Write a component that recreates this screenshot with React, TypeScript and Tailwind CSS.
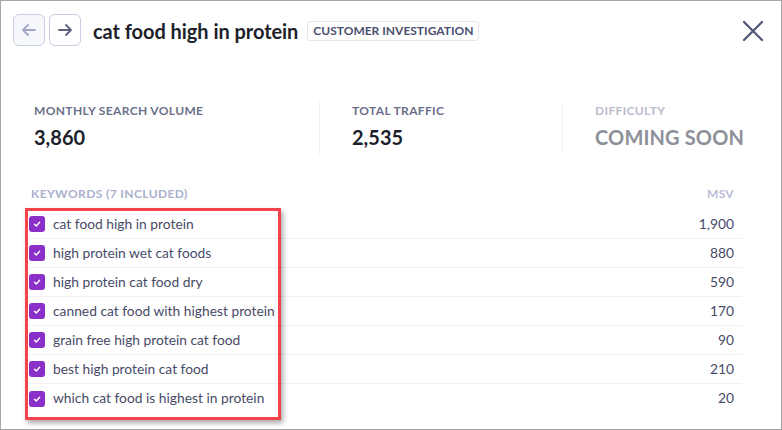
import React from "react";

const rows: [string, string][] = [
  ["cat food high in protein", "1,900"],
  ["high protein wet cat foods", "880"],
  ["high protein cat food dry", "590"],
  ["canned cat food with highest protein", "170"],
  ["grain free high protein cat food", "90"],
  ["best high protein cat food", "210"],
  ["which cat food is highest in protein", "20"],
];

function Check() {
  return (
    <div className="w-[16px] h-[16px] rounded-[3px] bg-[#8b2fc9] flex items-center justify-center shrink-0">
      <svg width="10" height="10" viewBox="0 0 10 10">
        <path d="M2.5 5.2 L4.3 7 L7.6 3.2" fill="none" stroke="white" strokeWidth="1.4" strokeLinecap="round" strokeLinejoin="round" />
      </svg>
    </div>
  );
}

export default function App() {
  return (
    <div
      className="w-[782px] h-[430px] border border-[#a6a6a6] bg-white relative overflow-hidden"
      style={{ fontFamily: "Lato, 'Noto Sans', sans-serif" }}
    >
      {/* header */}
      <div className="flex items-center pl-[12px] pt-[13px] pr-[17px]">
        <button className="w-[32px] h-[32px] rounded-[6px] border border-[#c9cee2] bg-[#f5f7fc] flex items-center justify-center">
          <svg width="18" height="18" viewBox="0 0 18 18">
            <path d="M15 9 H3 M8 4 L3 9 L8 14" fill="none" stroke="#a3a9c4" strokeWidth="1.8" strokeLinecap="round" strokeLinejoin="round" />
          </svg>
        </button>
        <button className="ml-[4px] w-[32px] h-[32px] rounded-[6px] border border-[#c9cee2] bg-white flex items-center justify-center">
          <svg width="18" height="18" viewBox="0 0 18 18">
            <path d="M3 9 H15 M10 4 L15 9 L10 14" fill="none" stroke="#5d6280" strokeWidth="1.8" strokeLinecap="round" strokeLinejoin="round" />
          </svg>
        </button>
        <div className="ml-[12px] text-[20px] font-bold text-[#1d1f2b] leading-none tracking-[-0.05px] mt-[2px]">cat food high in protein</div>
        <div className="ml-[9px] h-[20px] px-[5px] rounded-[3px] border border-[#e3e6ef] flex items-center text-[12px] font-bold text-[#4b5070] tracking-[0px] mt-[2px]">
          CUSTOMER INVESTIGATION
        </div>
        <div className="flex-1" />
        <svg width="22" height="22" viewBox="0 0 22 22" className="mt-[2px]">
          <path d="M2 2 L20 20 M20 2 L2 20" stroke="#4f5573" strokeWidth="2.2" strokeLinecap="round" />
        </svg>
      </div>

      {/* stats */}
      <div className="flex mt-[56px] h-[52px]">
        <div className="w-[319px] pl-[33px] border-r border-[#eceef4] pt-[2px]">
          <div className="text-[12px] font-bold text-[#6b6f89] leading-[14px] tracking-[0.35px]">MONTHLY SEARCH VOLUME</div>
          <div className="mt-[7px] text-[20px] font-bold text-[#1d1f2b] leading-[24px]">3,860</div>
        </div>
        <div className="w-[243px] pl-[32px] border-r border-[#eceef4] pt-[2px]">
          <div className="text-[12px] font-bold text-[#6b6f89] leading-[14px] tracking-[0.35px]">TOTAL TRAFFIC</div>
          <div className="mt-[7px] text-[20px] font-bold text-[#1d1f2b] leading-[24px]">2,535</div>
        </div>
        <div className="pl-[32px] pt-[2px]">
          <div className="text-[12px] font-bold text-[#b9bccb] leading-[14px] tracking-[0.35px]">DIFFICULTY</div>
          <div className="mt-[7px] text-[20px] font-bold text-[#8e9099] leading-[24px] tracking-[0.15px]">COMING SOON</div>
        </div>
      </div>

      {/* keywords */}
      <div className="mt-[33px] pl-[25px] w-[741px]">
        <div className="flex justify-between pl-[5px] pr-[8px] text-[12px] font-bold leading-[14px]">
          <span className="text-[#a9b1cc] tracking-[0.4px]">KEYWORDS (7 INCLUDED)</span>
          <span className="text-[#b8bcd4] tracking-[0.3px]">MSV</span>
        </div>
        <div className="mt-[9px]">
          {rows.map(([k, v], i) => (
            <div
              key={i}
              className={`flex items-center h-[29px] pl-[3px] pr-[8px] ${i < rows.length - 1 ? "border-b border-[#f0f1f5]" : ""}`}
            >
              <Check />
              <span className="ml-[8px] text-[13.8px] text-[#474b67]">{k}</span>
              <span className="ml-auto text-[13.8px] text-[#474b67]">{v}</span>
            </div>
          ))}
        </div>
      </div>

      {/* highlight box */}
      <div className="absolute left-[24px] top-[207px] w-[256px] h-[212px] border-[3px] border-[#f2444a] shadow-[2px_3px_5px_rgba(0,0,0,0.35)] pointer-events-none" />
    </div>
  );
}
